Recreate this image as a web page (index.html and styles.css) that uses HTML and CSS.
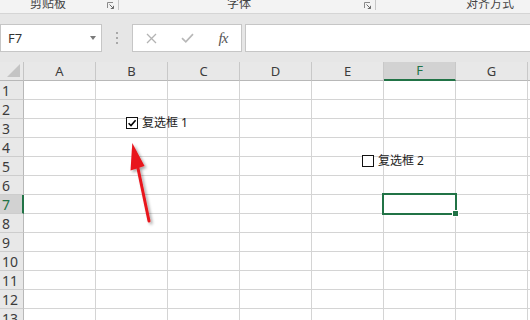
FILE: index.html
```html
<!DOCTYPE html>
<html lang="zh-CN">
<head>
<meta charset="utf-8">
<title>Excel</title>
<link rel="stylesheet" href="styles.css">
</head>
<body>
<div class="ribbon">
  <span class="rl l1">剪贴板</span>
  <svg class="launch l-a" viewBox="0 0 7 7"><path d="M0.5 6V0.5H6" fill="none" stroke="#8a8a8a"/><path d="M2.5 2.5L6.5 6.5M3.8 6.5H6.5V3.8" fill="none" stroke="#6a6a6a"/></svg>
  <span class="vsep"></span>
  <span class="rl l2">字体</span>
  <svg class="launch l-b" viewBox="0 0 7 7"><path d="M0.5 6V0.5H6" fill="none" stroke="#8a8a8a"/><path d="M2.5 2.5L6.5 6.5M3.8 6.5H6.5V3.8" fill="none" stroke="#6a6a6a"/></svg>
  <span class="vsep"></span>
  <span class="rl l3">对齐方式</span>
</div>

<div class="fbar">
  <div class="namebox"><span class="ref">F7</span><span class="caret"></span></div>
  <div class="dots"><i></i><i></i><i></i></div>
  <div class="fbtns">
    <span class="fb"><svg width="11" height="11" viewBox="0 0 11 11"><path d="M1 1L10 10M10 1L1 10" stroke="#b3b3b3" stroke-width="1.3"/></svg></span>
    <span class="fb"><svg width="13" height="10" viewBox="0 0 13 10"><path d="M1 5.2L4.8 8.8L12 1.2" fill="none" stroke="#b8b8b8" stroke-width="1.7"/></svg></span>
    <span class="fb fx">fx</span>
  </div>
  <div class="finput"></div>
</div>

<div class="sheet">
  <div class="grid">
    <div class="c corner"><svg width="14" height="14" viewBox="0 0 14 14"><path d="M13 0V13H0Z" fill="#c4c4c4"/></svg></div>
    <div class="c ch">A</div><div class="c ch">B</div><div class="c ch">C</div><div class="c ch">D</div><div class="c ch">E</div><div class="c ch on">F</div><div class="c ch">G</div><div class="c ch">H</div>

    <div class="c rh">1</div><div class="c"></div><div class="c"></div><div class="c"></div><div class="c"></div><div class="c"></div><div class="c"></div><div class="c"></div><div class="c"></div>
    <div class="c rh">2</div><div class="c"></div><div class="c"></div><div class="c"></div><div class="c"></div><div class="c"></div><div class="c"></div><div class="c"></div><div class="c"></div>
    <div class="c rh">3</div><div class="c"></div><div class="c"></div><div class="c"></div><div class="c"></div><div class="c"></div><div class="c"></div><div class="c"></div><div class="c"></div>
    <div class="c rh">4</div><div class="c"></div><div class="c"></div><div class="c"></div><div class="c"></div><div class="c"></div><div class="c"></div><div class="c"></div><div class="c"></div>
    <div class="c rh">5</div><div class="c"></div><div class="c"></div><div class="c"></div><div class="c"></div><div class="c"></div><div class="c"></div><div class="c"></div><div class="c"></div>
    <div class="c rh">6</div><div class="c"></div><div class="c"></div><div class="c"></div><div class="c"></div><div class="c"></div><div class="c"></div><div class="c"></div><div class="c"></div>
    <div class="c rh on">7</div><div class="c"></div><div class="c"></div><div class="c"></div><div class="c"></div><div class="c"></div><div class="c active"><span class="selbox"></span><span class="handle"></span></div><div class="c"></div><div class="c"></div>
    <div class="c rh">8</div><div class="c"></div><div class="c"></div><div class="c"></div><div class="c"></div><div class="c"></div><div class="c"></div><div class="c"></div><div class="c"></div>
    <div class="c rh">9</div><div class="c"></div><div class="c"></div><div class="c"></div><div class="c"></div><div class="c"></div><div class="c"></div><div class="c"></div><div class="c"></div>
    <div class="c rh">10</div><div class="c"></div><div class="c"></div><div class="c"></div><div class="c"></div><div class="c"></div><div class="c"></div><div class="c"></div><div class="c"></div>
    <div class="c rh">11</div><div class="c"></div><div class="c"></div><div class="c"></div><div class="c"></div><div class="c"></div><div class="c"></div><div class="c"></div><div class="c"></div>
    <div class="c rh">12</div><div class="c"></div><div class="c"></div><div class="c"></div><div class="c"></div><div class="c"></div><div class="c"></div><div class="c"></div><div class="c"></div>
    <div class="c rh">13</div><div class="c"></div><div class="c"></div><div class="c"></div><div class="c"></div><div class="c"></div><div class="c"></div><div class="c"></div><div class="c"></div>
  </div>

  <label class="cb cb1"><span class="box"><svg width="10" height="10" viewBox="0 0 10 10"><path d="M1.6 5.2L4 7.6L8.6 2.2" fill="none" stroke="#000" stroke-width="1.6"/></svg></span><span class="cbt">复选框 1</span></label>
  <label class="cb cb2"><span class="box"></span><span class="cbt">复选框 2</span></label>

  <svg class="arrow" width="530" height="258" viewBox="0 62 530 258">
    <defs>
      <filter id="sh" x="-50%" y="-50%" width="200%" height="200%">
        <feDropShadow dx="2" dy="2" stdDeviation="1.5" flood-color="#000" flood-opacity="0.35"/>
      </filter>
    </defs>
    <g filter="url(#sh)">
      <path d="M149 221L137.5 166" stroke="#e8141b" stroke-width="3" stroke-linecap="round"/>
      <path d="M132.3 143L130.5 170.5L144.5 166Z" fill="#e8141b"/>
    </g>
  </svg>
</div>
</body>
</html>
```
FILE: styles.css
```css
html, body {
  margin: 0;
  padding: 0;
}
body {
  width: 530px;
  height: 320px;
  overflow: hidden;
  background: #fff;
  font-family: "Noto Sans", "Noto Sans CJK SC", sans-serif;
  color: #3c3c3c;
}

/* ribbon group labels */
.ribbon {
  display: flex;
  align-items: flex-start;
  height: 13px;
  background: #f3f3f3;
  border-bottom: 1px solid #d5d5d5;
  overflow: hidden;
}
.rl {
  font-family: "Noto Sans CJK SC", sans-serif;
  font-size: 12px;
  line-height: 12px;
  margin-top: -3px;
  color: #444;
  white-space: nowrap;
}
.l1 { margin-left: 30px; }
.l2 { margin-left: 108px; }
.l3 { margin-left: 90px; }
.launch {
  display: block;
  width: 7px;
  height: 7px;
  margin-top: 2px;
}
.l-a { margin-left: 41px; }
.l-b { margin-left: 113px; }
.vsep {
  display: block;
  width: 1px;
  height: 10px;
  background: #c6c6c6;
  margin-left: 4px;
}

/* formula bar */
.fbar {
  display: flex;
  align-items: flex-start;
  box-sizing: border-box;
  height: 48px;
  padding-top: 10px;
  background: #e6e6e6;
  overflow: hidden;
}
.namebox {
  box-sizing: border-box;
  width: 102px;
  height: 28px;
  background: #fff;
  border: 1px solid #c6c6c6;
  display: flex;
  align-items: center;
  padding-left: 7px;
}
.ref {
  font-size: 13px;
  color: #333;
}
.caret {
  margin-left: auto;
  margin-right: 5px;
  width: 0;
  height: 0;
  border-left: 3.5px solid transparent;
  border-right: 3.5px solid transparent;
  border-top: 4px solid #7a7a7a;
}
.dots {
  height: 28px;
  width: 2px;
  margin-left: 14px;
  display: flex;
  flex-direction: column;
  justify-content: center;
  gap: 3px;
}
.dots i {
  display: block;
  width: 2px;
  height: 2px;
  background: #a8a8a8;
}
.fbtns {
  box-sizing: border-box;
  width: 110px;
  height: 28px;
  margin-left: 14px;
  background: #fff;
  border: 1px solid #c6c6c6;
  display: flex;
  align-items: center;
}
.fb {
  width: 36px;
  display: flex;
  justify-content: center;
  align-items: center;
}
.fx {
  font-family: "Liberation Serif", "DejaVu Serif", serif;
  font-style: italic;
  font-size: 15px;
  color: #555;
  letter-spacing: -1px;
}
.finput {
  flex: 1;
  height: 28px;
  box-sizing: border-box;
  margin-left: 3px;
  margin-right: -10px;
  background: #fff;
  border: 1px solid #c6c6c6;
}

/* sheet */
.sheet {
  position: relative;
  width: 530px;
  height: 258px;
  overflow: hidden;
}
.grid {
  display: grid;
  grid-template-columns: 24px repeat(8, 72px);
  grid-auto-rows: 19px;
  width: 600px;
}
.c {
  box-sizing: border-box;
  border-right: 1px solid #d4d4d4;
  border-bottom: 1px solid #d4d4d4;
  background: #fff;
}
.corner {
  background: #e8e8e8;
  border-right-color: #c4c4c4;
  border-bottom-color: #b8b8b8;
  display: flex;
  align-items: flex-end;
  justify-content: flex-end;
  padding: 0 2px 2px 0;
}
.corner svg { display: block; }
.ch {
  background: #e8e8e8;
  border-right-color: #c8c8c8;
  border-bottom-color: #b8b8b8;
  font-size: 13px;
  line-height: 18px;
  text-align: center;
  color: #3c3c3c;
}
.ch.on {
  background: #d2d2d2;
  border-bottom: 2px solid #217346;
  color: #217346;
  line-height: 17px;
}
.rh {
  background: #e8e8e8;
  border-right-color: #b8b8b8;
  border-bottom-color: #cdcdcd;
  font-size: 14px;
  line-height: 20px;
  padding-left: 2px;
  color: #3c3c3c;
}
.rh.on {
  background: #d2d2d2;
  border-right: 2px solid #217346;
  color: #217346;
}
.active {
  position: relative;
}
.selbox {
  position: absolute;
  left: -2px;
  top: -2px;
  width: 75px;
  height: 22px;
  box-sizing: border-box;
  border: 2px solid #217346;
}
.handle {
  position: absolute;
  left: 69px;
  top: 16px;
  width: 5px;
  height: 5px;
  background: #217346;
  outline: 1px solid #fff;
}

/* form-control checkboxes floating on the sheet */
.cb {
  position: absolute;
  display: flex;
  align-items: center;
  gap: 4px;
  font-family: "Noto Sans", "Noto Sans CJK SC", sans-serif;
  font-size: 12px;
  line-height: 14px;
  color: #222;
  white-space: nowrap;
}
.cb1 { left: 126px; top: 54px; }
.cb2 { left: 362px; top: 92px; }
.box {
  box-sizing: border-box;
  width: 12px;
  height: 12px;
  border: 1px solid #111;
  background: #fff;
  display: flex;
  align-items: center;
  justify-content: center;
}
.box svg { display: block; }
.arrow {
  position: absolute;
  left: 0;
  top: 0;
  pointer-events: none;
}
```
